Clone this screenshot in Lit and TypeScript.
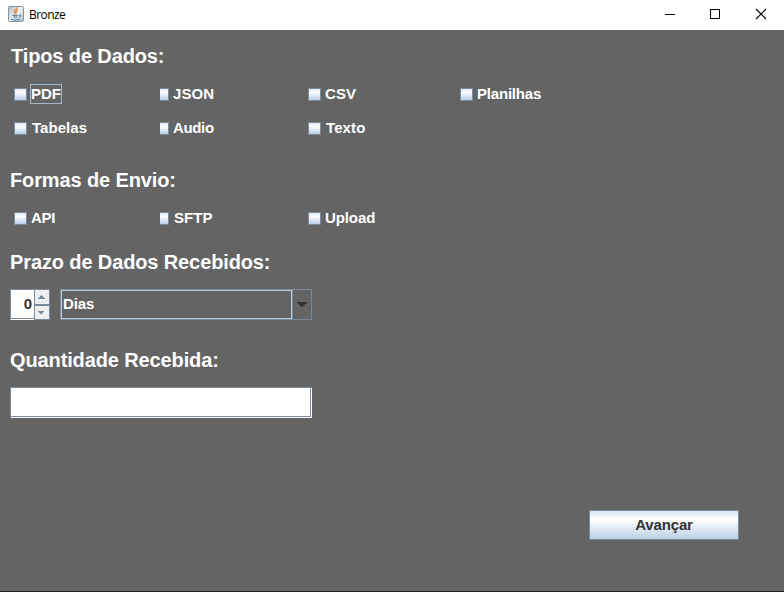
import { LitElement, html, css } from "lit";
import { customElement, property } from "lit/decorators.js";
import { classMap } from "lit/directives/class-map.js";
import { styleMap } from "lit/directives/style-map.js";

interface Option {
  text: string;
  gap: number;
  spacing: number;
  clipped?: boolean;
  focused?: boolean;
}

@customElement("check-option")
class CheckOption extends LitElement {
  @property({ attribute: false }) option!: Option;

  static styles = css`
    :host { display: flex; align-items: center; height: 20px; }
    .box {
      box-sizing: border-box; flex: none; width: 13px; height: 13px; margin-top: 1px;
      border: 1px solid #7a8a99;
      background: linear-gradient(#dde8f3 0%, #ffffff 30%, #dde8f3 62%, #b8cfe5 100%);
    }
    .clipped { width: 9px; border-left: 0; }
    .text {
      box-sizing: border-box; height: 20px; line-height: 18px; padding: 0 1px;
      border: 1px solid transparent; white-space: nowrap;
    }
    .focused { border-color: #a3b8cc; width: 32px; padding: 0; }
  `;

  render() {
    const o = this.option;
    return html`<span class=${classMap({ box: true, clipped: !!o.clipped })}></span>
      <span class=${classMap({ text: true, focused: !!o.focused })}
        style=${styleMap({ marginLeft: `${o.gap}px`, letterSpacing: `${o.spacing}px` })}>${o.text}</span>`;
  }
}

@customElement("app-root")
class AppRoot extends LitElement {
  static styles = css`
    :host {
      display: flex; flex-direction: column; box-sizing: border-box;
      width: 784px; height: 592px; overflow: hidden;
      background: #646464; border-bottom: 1px solid #251f24;
      font: bold 15px/20px "Liberation Sans", Arial, sans-serif; color: #fff;
    }
    .bar { display: flex; align-items: center; height: 30px; flex: none; background: #fff; color: #000; }
    .java { display: block; margin: -2px 5px 0 8px; }
    .title { font: 12px/16px "Open Sans", "Noto Sans", sans-serif; letter-spacing: -0.55px; flex: 1; }
    .controls { display: block; flex: none; }
    .content { display: flex; flex-direction: column; padding: 0 45px 0 10px; }
    h2 {
      margin: 0; font-size: 20px; line-height: 24px; font-weight: bold; white-space: nowrap;
      letter-spacing: -0.12px;
    }
    .types { margin: 14px 0 0 1px; }
    .send { margin-top: 30px; }
    .term { margin-top: 22px; }
    .amount { margin-top: 28px; }
    .grid { display: grid; grid-template-columns: 146px 148px 152px 120px; row-gap: 14px; margin: 16px 0 0 4px; }
    .fields { display: flex; gap: 10px; margin-top: 15px; }
    .spinner { display: flex; width: 40px; height: 31px; }
    .number {
      box-sizing: border-box; width: 24px; height: 31px; padding: 0 2px 0 0;
      border: solid #7a8a99; border-width: 1px 0 1px 1px; border-bottom-color: #fff;
      box-shadow: inset 0 -1px #7a8a99;
      background: #fff; color: #333; text-align: right; line-height: 28px;
    }
    .arrows { display: block; }
    .combo {
      display: flex; box-sizing: border-box; width: 252px; height: 31px; border: 1px solid #7a8a99;
    }
    .value {
      box-sizing: border-box; width: 231px; height: 29px; border: 1px solid #b8cfe5;
      padding-left: 1px; line-height: 26px; letter-spacing: -0.1px;
    }
    .drop { display: block; }
    .entry {
      box-sizing: border-box; width: 302px; height: 31px; margin-top: 15px; background: #fff;
      border: solid #7a8a99; border-width: 1px 0 0 1px;
      padding: 0 1px 1px 0;
    }
    .inner { box-sizing: border-box; height: 29px; border: solid #7a8a99; border-width: 0 1px 1px 0; }
    .next {
      align-self: flex-end; box-sizing: border-box; width: 150px; height: 30px; margin-top: 92px; padding: 0;
      border: 1px solid #7a8a99; border-radius: 0; color: #333;
      background: linear-gradient(#dde8f3 0%, #ffffff 30%, #dde8f3 65%, #b8cfe5 100%);
      font: inherit; line-height: 28px; letter-spacing: -0.15px;
    }
  `;

  private types: Option[] = [
    { text: "PDF", gap: 3, spacing: 0, focused: true },
    { text: "JSON", gap: 2, spacing: 0.1, clipped: true },
    { text: "CSV", gap: 2, spacing: 0.1 },
    { text: "Planilhas", gap: 2, spacing: -0.2 },
    { text: "Tabelas", gap: 3, spacing: 0.05 },
    { text: "Audio", gap: 2, spacing: -0.35, clipped: true },
    { text: "Texto", gap: 3, spacing: 0.1 },
  ];

  private sends: Option[] = [
    { text: "API", gap: 2, spacing: -0.35 },
    { text: "SFTP", gap: 3, spacing: 0.05, clipped: true },
    { text: "Upload", gap: 2, spacing: -0.1 },
  ];

  private list(options: Option[]) {
    return options.map((o) => html`<check-option .option=${o}></check-option>`);
  }

  render() {
    return html`
      <div class="bar">
        <svg class="java" width="16" height="16" viewBox="0 0 16 16" fill="none">
          <defs><linearGradient id="tile" x1="0" y1="0" x2="1" y2="1">
            <stop offset="0" stop-color="#a9bac6"/><stop offset=".5" stop-color="#edf2f5"/><stop offset="1" stop-color="#b2c1cc"/>
          </linearGradient></defs>
          <rect x=".5" y=".5" width="15" height="15" rx="1" fill="url(#tile)" stroke="#8496a3"/>
          <path d="M8.6 1.5C9.5 3.5 5.5 4 6.3 6.2L7.5 8M10 4C8 5 7.2 5.6 8.6 7.4" stroke="#ec7c18" stroke-width="1.2"/>
          <path d="M4.5 9.3h5.5M5.3 11.1h4.2M3 13.3c2.5 1 7 .9 9.2-.1M11 9.2c2.4-.7 2.6 1.4.4 2.1" stroke="#436b8d"/>
        </svg>
        <span class="title">Bronze</span>
        <svg class="controls" width="144" height="30" viewBox="0 0 144 30" fill="none" stroke="#000">
          <path d="M25 14.5h10" shape-rendering="crispEdges"/>
          <rect x="70.5" y="9.5" width="9" height="9" shape-rendering="crispEdges"/>
          <path d="M116 9l10 10M126 9l-10 10" stroke-width="1.1"/>
        </svg>
      </div>
      <div class="content">
        <h2 class="types">Tipos de Dados:</h2>
        <div class="grid">${this.list(this.types)}</div>
        <h2 class="send">Formas de Envio:</h2>
        <div class="grid">${this.list(this.sends)}</div>
        <h2 class="term">Prazo de Dados Recebidos:</h2>
        <div class="fields">
          <div class="spinner">
            <div class="number">0</div>
            <svg class="arrows" width="16" height="31" viewBox="0 0 16 31" shape-rendering="crispEdges">
              <rect width="16" height="31" fill="#7a8a99"/>
              <path d="M1 1h14v14H1zM1 17h14v13H1z" fill="#eee"/>
              <path d="M7 6h1v1h1v1h1v1h1v1H4V9h1V8h1V7h1zM4 22h6v1H9v1H8v1H6v-1H5v-1H4z" fill="#7a8a99"/>
            </svg>
          </div>
          <div class="combo">
            <div class="value">Dias</div>
            <svg class="drop" width="19" height="29" viewBox="0 0 19 29" shape-rendering="crispEdges">
              <path d="M0 0h1v29H0z" fill="#7a8a99"/>
              <path d="M5 12h10v1h-1v1h-1v1h-1v1h-1v1H9v-1H8v-1H7v-1H6v-1H5z" fill="#333"/>
            </svg>
          </div>
        </div>
        <h2 class="amount">Quantidade Recebida:</h2>
        <div class="entry"><div class="inner"></div></div>
        <button class="next">Avançar</button>
      </div>`;
  }
}
